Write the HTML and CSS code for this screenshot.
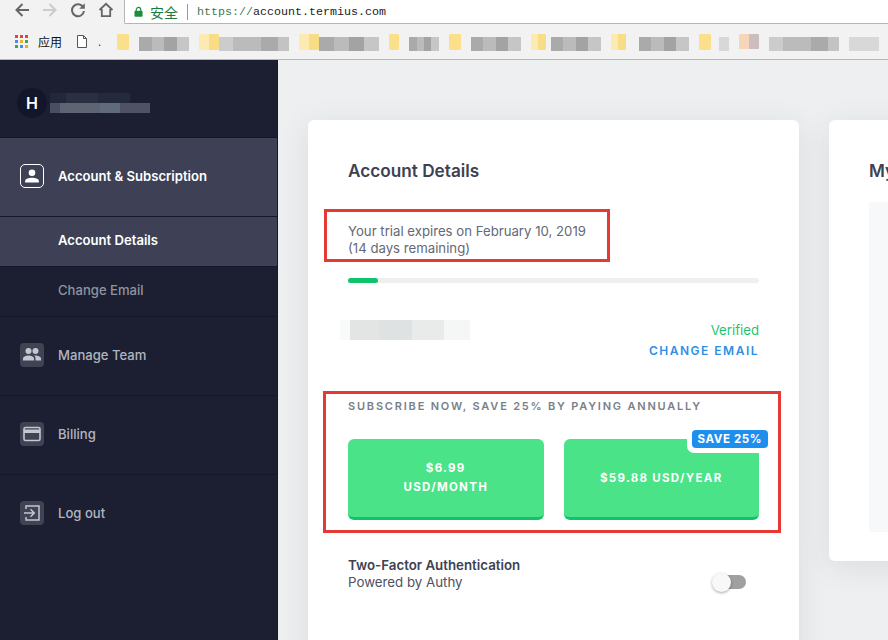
FILE: index.html
```html
<!DOCTYPE html>
<html lang="en">
<head>
<meta charset="utf-8">
<title>Termius Account</title>
<link rel="stylesheet" href="styles.css">
</head>
<body>
<header class="browser">
  <div class="toolbar">
    <div class="nav-icons">
      <svg class="nav" viewBox="0 0 16 16"><path d="M15 8H2.500M8.500 2 2.500 8l6 6" fill="none" stroke="#666" stroke-width="2"/></svg>
      <svg class="nav" viewBox="0 0 16 16"><path d="M15 8H2.500M8.500 2 2.500 8l6 6" fill="none" stroke="#ccc" stroke-width="2" transform="rotate(180 8 8)"/></svg>
      <svg class="nav" viewBox="0 0 16 16"><path d="M13.200 5.200A6 6 0 1 0 14 9" fill="none" stroke="#666" stroke-width="2"/><path d="M14.800 1.200v5.600H9.200z" fill="#666"/></svg>
      <svg class="nav" viewBox="0 0 16 16"><path d="M1.500 8 8 1.800 14.500 8M3.800 7v7.200h8.400V7" fill="none" stroke="#666" stroke-width="1.800"/></svg>
    </div>
    <div class="address">
      <svg class="lock" viewBox="0 0 10 12"><path d="M2.500 5V3.400a2.500 2.500 0 0 1 5 0V5" fill="none" stroke="#1e8e3e" stroke-width="1.300"/><rect y="4.600" width="9" height="6.600" x=".5" rx="1" fill="#1e8e3e"/></svg>
      <span class="secure">安全</span>
      <span class="url"><span class="scheme">https://</span>account.termius.com</span>
    </div>
  </div>
  <div class="bookmarks">
    <svg class="apps" viewBox="0 0 13 13"><g fill="#d9483b"><rect width="3" height="3"/><rect x="5" width="3" height="3"/><rect x="10" width="3" height="3"/></g><g fill="#4a8af4"><rect y="5" width="3" height="3"/><rect x="5" y="5" width="3" height="3" fill="#e8b23a"/><rect x="10" y="5" width="3" height="3" fill="#3aa757"/></g><g fill="#3aa757"><rect y="10" width="3" height="3"/><rect x="5" y="10" width="3" height="3" fill="#4a8af4"/><rect x="10" y="10" width="3" height="3" fill="#f2a81d"/></g></svg>
    <span class="apps-label">应用</span>
    <svg class="doc" viewBox="0 0 10 13"><path d="M.5.5h6l3 3v9h-9zM6.500.5v3h3" fill="#fff" stroke="#555"/></svg>
    <span class="dot">.</span>
    <span class="folder"></span><span class="blur w50"></span>
    <span class="folder pale w20"></span><span class="blur w70 soft"></span>
    <span class="folder pale w20"></span><span class="blur w60"></span>
    <span class="folder w10"></span><span class="blur w30"></span>
    <span class="folder"></span><span class="blur w50"></span>
    <span class="folder pale w15"></span><span class="blur w50"></span>
    <span class="folder pale w15 wide"></span><span class="blur w50"></span>
    <span class="folder tight"></span><span class="blur w10 faint"></span>
    <span class="folder pink"></span><span class="blur w70 soft"></span>
    <span class="blur w30 faint"></span>
  </div>
</header>

<div class="app">
  <aside class="sidebar">
    <div class="profile">
      <span class="avatar">H</span>
      <span class="profile-name"><span class="name-top"></span><span class="name-bottom"></span></span>
    </div>
    <a class="item active">
      <span class="icon outline">
        <svg viewBox="0 0 24 24"><circle cx="12" cy="8.500" r="3.600" fill="#fff"/><path d="M4.500 19v-1.600c0-2.400 4-3.600 7.500-3.600s7.500 1.200 7.500 3.600V19z" fill="#fff"/></svg>
      </span>
      <span>Account &amp; Subscription</span>
    </a>
    <a class="sub active-sub">Account Details</a>
    <a class="sub">Change Email</a>
    <a class="item">
      <span class="icon">
        <svg viewBox="0 0 24 24"><circle cx="8.500" cy="8" r="3" fill="#c3c7d0"/><circle cx="15.500" cy="8" r="3" fill="#c3c7d0"/><path d="M3 17.500v-2c0-2 3.300-3 5.500-3s5.500 1 5.500 3v2z" fill="#c3c7d0"/><path d="M15.200 12.500c2.300 0 5.800 1 5.800 3v2h-5.500v-2c0-1.200-.4-2.200-1.300-2.900z" fill="#c3c7d0"/></svg>
      </span>
      <span>Manage Team</span>
    </a>
    <a class="item">
      <span class="icon">
        <svg viewBox="0 0 24 24"><rect x="4" y="5.500" width="16" height="13" rx="1.500" fill="none" stroke="#c3c7d0" stroke-width="1.600"/><rect x="4" y="7.500" width="16" height="3.500" fill="#c3c7d0"/></svg>
      </span>
      <span>Billing</span>
    </a>
    <a class="item">
      <span class="icon">
        <svg viewBox="0 0 24 24"><path d="M6 8V5h13v14H6v-3" fill="none" stroke="#c3c7d0" stroke-width="1.500"/><path d="M4 12h10M10.500 8.200 14.300 12l-3.800 3.800" fill="none" stroke="#c3c7d0" stroke-width="1.500"/></svg>
      </span>
      <span>Log out</span>
    </a>
  </aside>

  <main class="content">
    <section class="card details">
      <h2 class="card-title">Account Details</h2>
      <p class="trial">Your trial expires on February 10, 2019<br>(14 days remaining)</p>
      <div class="progress"><div class="progress-fill"></div></div>
      <div class="email-row">
        <span class="email-blur"></span>
        <div class="email-status">
          <div class="verified">Verified</div>
          <a class="change">CHANGE EMAIL</a>
        </div>
      </div>
      <h3 class="subscribe">SUBSCRIBE NOW, SAVE 25% BY PAYING ANNUALLY</h3>
      <div class="plans">
        <button class="plan">$6.99<br>USD/MONTH</button>
        <button class="plan">$59.88 USD/YEAR<span class="badge">SAVE 25%</span></button>
      </div>
      <div class="two-factor">
        <div>
          <div class="tf-title">Two-Factor Authentication</div>
          <div class="tf-sub">Powered by Authy</div>
        </div>
        <span class="toggle"><span class="knob"></span></span>
      </div>
      <span class="redbox box-trial"></span>
      <span class="redbox box-sub"></span>
    </section>
    <section class="card plan-card">
      <h2 class="card-title">My</h2>
      <div class="inner-panel"></div>
    </section>
  </main>
</div>
</body>
</html>
```

FILE: styles.css
```css
* { box-sizing: border-box; }
html, body { margin: 0; height: 100%; overflow: hidden; }
body { width: 888px; height: 640px; font-family: Inter, "Noto Sans CJK SC", sans-serif; background: #edeff0; }
a { display: flex; }

.browser { height: 60px; background: #f2f2f2; border-bottom: 1px solid #b5b5b5; }
.toolbar { height: 24px; display: flex; }
.nav-icons { width: 124px; padding: 2px 0 0 14px; display: flex; gap: 12px; align-items: flex-start; }
.nav { width: 16px; height: 16px; flex: none; }
.address { flex: 1; height: 24px; background: #fff; border-left: 1px solid #b5b5b5; border-bottom: 1px solid #b5b5b5; display: flex; align-items: center; padding-left: 9px; border-bottom-left-radius: 2px; }
.lock { width: 9px; height: 12px; margin-right: 7px; }
.secure { font-size: 14px; color: #1d7a3c; padding-right: 9px; border-right: 1px solid #999; line-height: 16px; font-family: "Noto Sans CJK SC", sans-serif; }
.url { margin-left: 9px; font: 11.67px "Liberation Mono", monospace; color: #222; }
.scheme { color: #3f7a55; }

.bookmarks { height: 35px; display: flex; align-items: center; padding-left: 15px; overflow: hidden; }
.apps { width: 13px; height: 13px; flex: none; }
.apps-label { flex: none; width: 24px; margin-left: 10px; font-size: 12px; color: #111; white-space: nowrap; font-family: "Noto Sans CJK SC", sans-serif; }
.doc { width: 10px; height: 13px; margin-left: 15px; flex: none; }
.dot { flex: none; margin: 0 18px 0 11px; font-size: 11px; color: #333; width: 1px; }
.folder { width: 12px; height: 16px; background: #fbdf8a; border-radius: 1px; margin-right: 10px; flex: none; }
.folder.pale { background: linear-gradient(90deg, #fdeab2 0 50%, #f9dd85 50% 100%); }
.folder.w20 { width: 20px; margin-right: 0; }
.folder.w15 { width: 15px; margin-right: 5px; }
.folder.w15.wide { margin-right: 13px; }
.folder.w10 { width: 10px; }
.folder.tight { margin-right: 8px; }
.folder.pink { width: 20px; height: 15px; background: linear-gradient(90deg, #f6d6b8 0 50%, #cdbdbf 50% 100%); }
.blur { height: 14px; margin: 4px 10px 0 0; flex: none; background: linear-gradient(90deg, #aaa 0 25%, #bbb 25% 50%, #a3a3a3 50% 75%, #c6c6c6 75% 100%); }
.blur.soft { background: linear-gradient(90deg, #ccc 0 20%, #bbb 20% 60%, #aaa 60% 85%, #c3c3c3 85% 100%); }
.blur.faint { background: #d8d8d8; }
.w10 { width: 10px; }
.w30 { width: 30px; }
.w50 { width: 50px; }
.w60 { width: 60px; }
.w70 { width: 70px; }

.app { display: flex; height: 580px; overflow: hidden; }
.sidebar { width: 278px; flex: none; background: #1c1f32; color: #b1b5c0; font-size: 13.1px; font-weight: 500; border-right: 1px solid #15182a; }
.profile { height: 77px; display: flex; align-items: center; padding: 8px 0 0 17px; }
.avatar { width: 30px; height: 30px; border-radius: 50%; background: #12162a; color: #fff; font-size: 16px; font-weight: 600; display: flex; align-items: center; padding-left: 9px; overflow: hidden; flex: none; }
.profile-name { display: flex; flex-direction: column; margin: 0 0 0 3px; padding-top: 0; }
.name-top { width: 80px; height: 10px; margin-left: 0; background: linear-gradient(90deg, #23273a 0 20%, #2b2f42 20% 60%, #25293c 60% 100%); }
.name-bottom { width: 100px; height: 10px; background: linear-gradient(90deg, #4a4e60 0 10%, #5f6473 10% 50%, #5f6b7a 50% 70%, #4e5264 70% 100%); }
.item { height: 79px; display: flex; align-items: center; padding: 0 0 3px 20px; gap: 14px; border-top: 1px solid #15182a; }
.item.active { background: #3e4156; color: #fff; font-weight: 600; }
.icon { width: 24px; height: 24px; border-radius: 4px; background: #3f4354; display: flex; flex: none; }
.icon svg { width: 24px; height: 24px; }
.icon.outline { background: transparent; border: 1px solid #fff; border-radius: 5px; }
.icon.outline svg { width: 22px; height: 22px; }
.sub { height: 50px; display: flex; align-items: center; padding: 0 0 4px 58px; border-top: 1px solid #15182a; color: #8f95a3; }
.sub.active-sub { background: #3e4156; color: #fff; font-weight: 600; }

.content { flex: 1; display: flex; gap: 30px; padding: 60px 0 0 30px; overflow: hidden; align-items: flex-start; }
.card { background: #fff; border-radius: 6px; flex: none; position: relative; box-shadow: 0 6px 30px rgba(60, 70, 90, .1); padding: 0 40px; }
.details { width: 491px; height: 560px; }
.plan-card { width: 491px; height: 441px; }
.card-title { margin: 40px 0 0; font-size: 17.2px; line-height: 22px; font-weight: 600; color: #3d4152; }
.trial { margin: 41px 0 0; font-size: 13.2px; line-height: 17px; color: #636975; }
.progress { height: 5px; margin-top: 21px; background: #eef0f0; border-radius: 3px; }
.progress-fill { width: 30px; height: 5px; background: #0fc46c; border-radius: 3px; }
.email-row { display: flex; justify-content: space-between; margin-top: 39px; align-items: flex-start; }
.email-blur { width: 130px; height: 20px; margin: -2px 0 0 -8px; background: linear-gradient(90deg, #f9fafa 0 8%, #e3e5e5 8% 30%, #dfe2e2 30% 55%, #e9ebeb 55% 80%, #f5f6f6 80% 100%); }
.email-status { text-align: right; }
.verified { font-size: 13.2px; line-height: 17px; color: #1fc46f; }
.change { display: block; margin-top: 4px; font-size: 12px; line-height: 15px; font-weight: 600; letter-spacing: 1.5px; color: #2f8fe6; }
.subscribe { margin: 41px 0 0; font-size: 11px; line-height: 14px; font-weight: 600; letter-spacing: 1.8px; color: #7a8089; }
.plans { display: flex; gap: 20px; margin-top: 26px; }
.plan { flex: 1; height: 81px; padding: 0; border: 0; border-bottom: 3px solid #0fc46c; border-radius: 6px; background: #4ae388; color: #fff; font: 700 11.5px/19px Inter, sans-serif; letter-spacing: 1.3px; position: relative; }
.badge { position: absolute; top: -9px; right: -9px; padding: 0 6px; height: 18px; background: #1f8fee; border-radius: 4px; box-shadow: -2px 2px 0 3px #fff; font-size: 11.5px; line-height: 18px; letter-spacing: .6px; }
.two-factor { display: flex; justify-content: space-between; align-items: flex-end; margin-top: 37px; }
.tf-title { font-size: 13.3px; line-height: 17px; font-weight: 600; color: #3d4152; }
.tf-sub { font-size: 13.3px; line-height: 17px; color: #4d5160; }
.toggle { width: 32px; height: 14px; margin: 0 13px 2px 0; background: #a0a0a0; border-radius: 7px; position: relative; }
.knob { position: absolute; left: -2px; top: -2.500px; width: 19px; height: 19px; border-radius: 50%; background: #f8f8f8; box-shadow: 0 1px 3px rgba(0, 0, 0, .35); }
.redbox { position: absolute; border: 3px solid #e53935; pointer-events: none; }
.box-trial { left: 16px; top: 89px; width: 286px; height: 53px; }
.box-sub { left: 15px; top: 271px; width: 458px; height: 142px; }
.inner-panel { margin-top: 20px; width: 100%; height: 330px; background: #f7f8f9; border-radius: 4px; }
```
